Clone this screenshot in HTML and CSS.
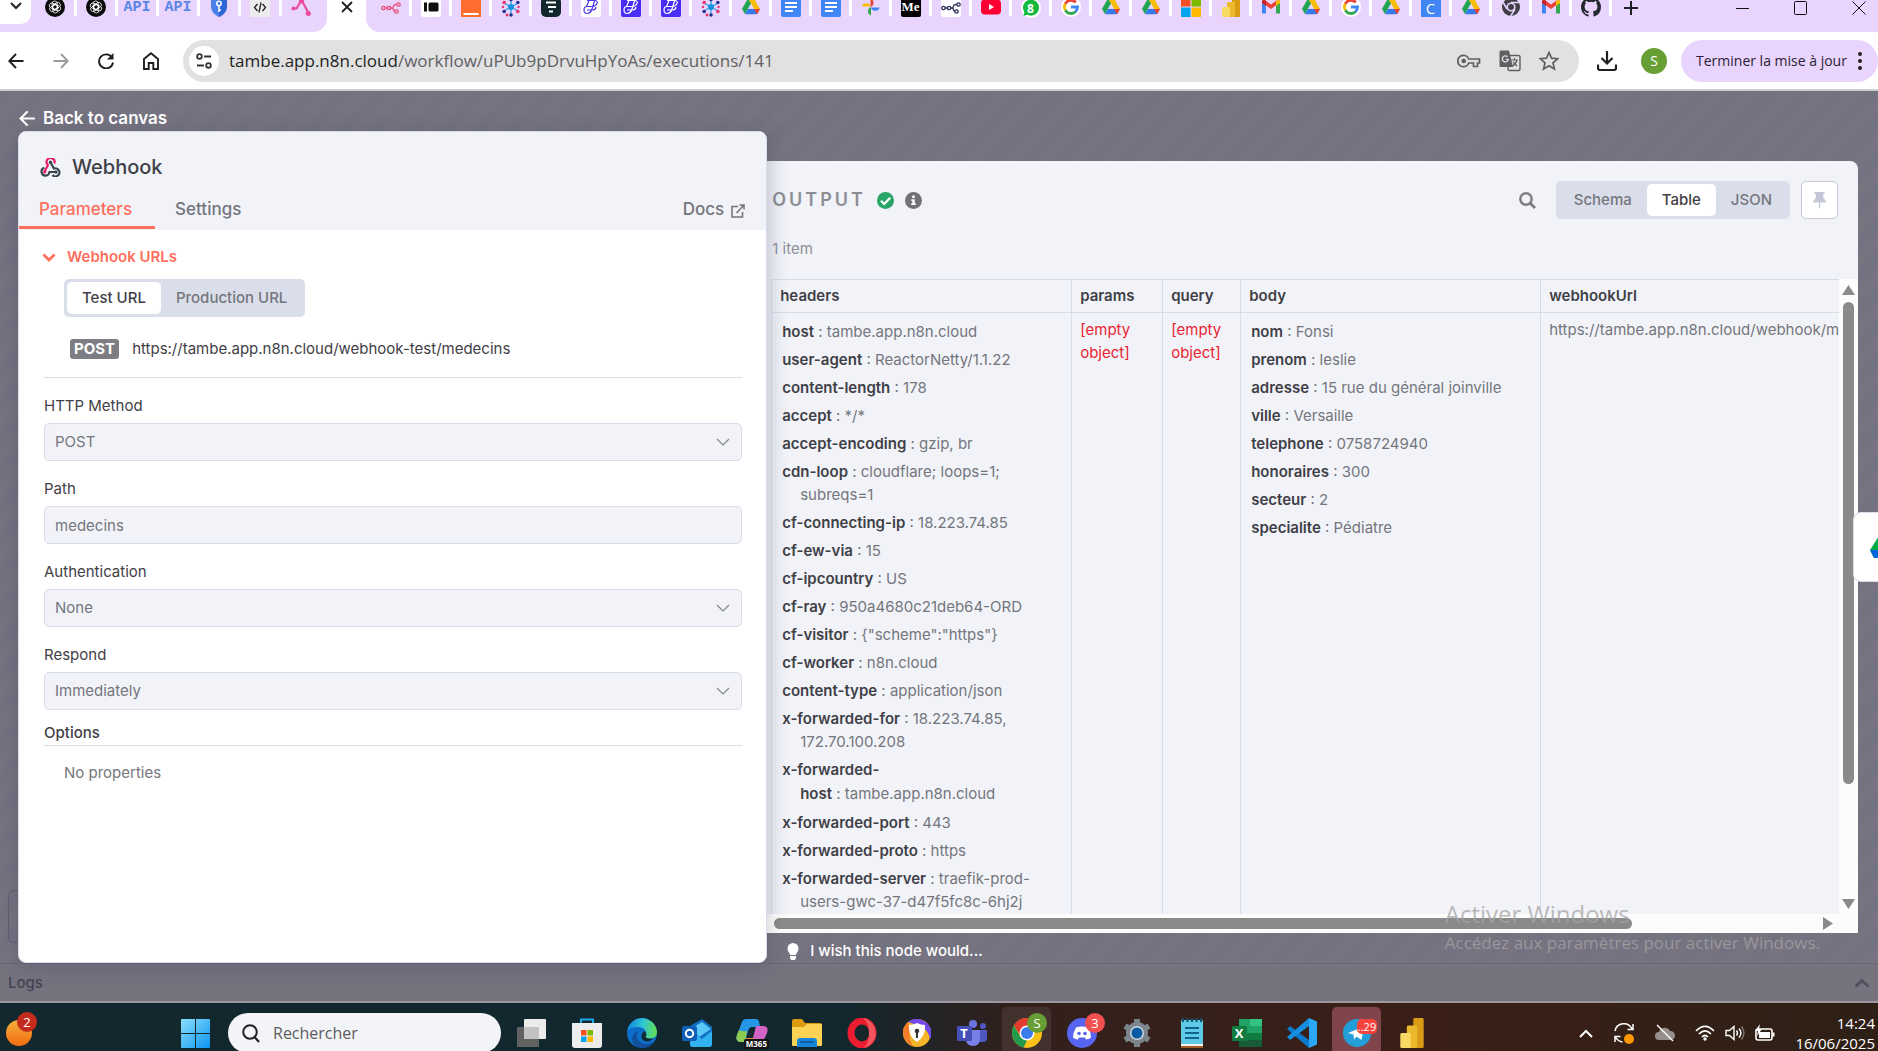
FILE: index.html
```html
<!DOCTYPE html>
<html lang="fr">
<head>
<meta charset="utf-8">
<title>n8n - Webhook</title>
<meta name="viewport" content="width=device-width, initial-scale=1">
<link rel="stylesheet" href="styles.css">
</head>
<body>
<svg class="defs" aria-hidden="true">
  <symbol id="openai" viewBox="0 0 20 20"><circle cx="10" cy="10" r="10" fill="#0b0b0b"/><g fill="none" stroke="#fff" stroke-width=".8"><rect x="7.200" y="4" width="5" height="8.500" rx="2.500"/><rect x="7.200" y="4" width="5" height="8.500" rx="2.500" transform="rotate(60 10 10)"/><rect x="7.200" y="4" width="5" height="8.500" rx="2.500" transform="rotate(120 10 10)"/><rect x="7.200" y="4" width="5" height="8.500" rx="2.500" transform="rotate(180 10 10)"/><rect x="7.200" y="4" width="5" height="8.500" rx="2.500" transform="rotate(240 10 10)"/><rect x="7.200" y="4" width="5" height="8.500" rx="2.500" transform="rotate(300 10 10)"/></g></symbol>
  <symbol id="shield" viewBox="0 0 20 20"><path d="M2 1h16v8c0 6-4 9-8 11-4-2-8-5-8-11z" fill="#4a80ea"/><path d="M10 1h8v8c0 6-4 9-8 11z" fill="#2f66d4"/><circle cx="10" cy="6.500" r="2.200" fill="none" stroke="#fff" stroke-width="1.500"/><path d="M10 9v6M10 13h2" stroke="#fff" stroke-width="1.500"/></symbol>
  <symbol id="code" viewBox="0 0 20 20"><rect width="20" height="20" rx="1" fill="#ececec"/><path d="M7.500 7 4.500 10.500l3 3.500M12.500 7l3 3.500-3 3.500M11 5.500l-2 10" fill="none" stroke="#222" stroke-width="1.300"/></symbol>
  <symbol id="pinkzig" viewBox="0 0 20 20"><path d="M2.500 11.500h3l5-8.500 7 13" fill="none" stroke="#ea4b9b" stroke-width="2.200" stroke-linecap="round" stroke-linejoin="round"/><circle cx="2.500" cy="11.500" r="2" fill="#ea4b9b"/><circle cx="17.300" cy="16.500" r="2.500" fill="#ea4b9b"/><circle cx="10.500" cy="4" r="2.500" fill="#ea4b9b"/></symbol>
  <symbol id="n8n" viewBox="0 0 20 20"><g fill="none" stroke="currentColor" stroke-width="1.300"><circle cx="2.500" cy="11" r="1.700"/><circle cx="8" cy="11" r="1.700"/><circle cx="17.500" cy="7.500" r="1.700"/><circle cx="15.500" cy="14.500" r="1.700"/><path d="M4.200 11h2M9.700 11h1.300q1 0 1.400-1.700t2-1.800h1.300M11 11q1 0 1.400 1.700t1.700 1.800"/></g></symbol>
  <symbol id="ibox" viewBox="0 0 20 20"><rect width="20" height="20" rx="3" fill="#fff"/><rect x="3" y="5.500" width="3" height="9" fill="#111"/><rect x="7.500" y="5.500" width="10" height="9" rx="1.500" fill="#111"/></symbol>
  <symbol id="orange" viewBox="0 0 20 20"><rect width="20" height="20" fill="#ff6d2e"/><path d="M2.500 16h15v2h-15z" fill="#fff"/></symbol>
  <symbol id="molecule" viewBox="0 0 20 20"><g stroke="#28a6e8" stroke-width="1.300"><path d="M10 1v18M2 5.500l16 9M2 14.500l16-9"/></g><circle cx="10" cy="10" r="3" fill="#1b8fe0"/><g fill="#26308a"><circle cx="10" cy="2.500" r="1.800"/><circle cx="16.800" cy="5.500" r="1.800"/><circle cx="3.200" cy="14.500" r="1.800"/><circle cx="10" cy="18" r="1.800"/></g><g fill="#ee3268"><circle cx="3.200" cy="5.500" r="1.800"/><circle cx="16.800" cy="14.500" r="1.800"/><circle cx="6" cy="18" r="1.400"/><circle cx="17.500" cy="10" r="1.200"/><circle cx="2" cy="10" r="1.200"/></g></symbol>
  <symbol id="darkf" viewBox="0 0 20 20"><rect width="20" height="20" rx="5" fill="#12282c"/><path d="M5 5.500h10M7 10h8M8 14.500h4" stroke="#fff" stroke-width="2"/></symbol>
  <symbol id="dzig" viewBox="0 0 20 20"><path d="M6 3.500h8q3 .5 2 3t-4 3H6q-3 0-3 3.500t3 3.500q4-.5 5-4.500l2.500-8M8 3.500 5.500 9.500M6 13h6q3-.5 3-3" fill="none" stroke="currentColor" stroke-width="1.200"/></symbol>
  <symbol id="drive" viewBox="0 0 20 20"><path d="M7 1.500h6l6 10.500h-6z" fill="#fbbc04"/><path d="M7 1.500 1 12l3 5 6-10.500z" fill="#22a552"/><path d="M4 17.300h12l3-5.300H7z" fill="#3478ee"/><path d="M19 12l-3 5.300L13 12z" fill="#ea4335"/><path d="M10 6.800 13 12H7z" fill="#e8d4fd"/></symbol>
  <symbol id="gdoc" viewBox="0 0 20 20"><rect width="20" height="20" rx="2" fill="#4285f4"/><path d="M4 6h12M4 10h12M4 14h8" stroke="#fff" stroke-width="1.800"/></symbol>
  <symbol id="photos" viewBox="0 0 20 20"><path d="M9.500 10V1.500a4.500 4.500 0 0 1 0 8.500z" fill="#ea4335"/><path d="M9.500 9.500H1a4.400 4.400 0 0 1 8.500 0z" fill="#fbbc04"/><path d="M10 10v8.500a4.500 4.500 0 0 1 0-8.500z" fill="#34a853"/><path d="M10 10.500h8.500a4.400 4.400 0 0 1-8.500 0z" fill="#4285f4"/></symbol>
  <symbol id="youtube" viewBox="0 0 20 20"><rect y="2.500" width="20" height="15" rx="4" fill="#ff0033"/><path d="M8 7v6l5-3z" fill="#fff"/></symbol>
  <symbol id="whats" viewBox="0 0 20 20"><circle cx="10" cy="10" r="10" fill="#fff"/><circle cx="10" cy="9.700" r="8" fill="#12b93c"/><path d="M2.500 18 4 12l4 4z" fill="#12b93c"/></symbol>
  <symbol id="google" viewBox="0 0 20 20"><circle cx="10" cy="10" r="10" fill="#fff"/><g fill="none" stroke-width="2.800"><path d="M14.800 5.300A6.600 6.600 0 0 0 4.300 6.800" stroke="#ea4335"/><path d="M4.300 6.800a6.600 6.600 0 0 0 0 6.400" stroke="#fbbc04"/><path d="M4.300 13.200a6.600 6.600 0 0 0 10 1.700" stroke="#34a853"/><path d="M14.300 14.900A6.600 6.600 0 0 0 16.600 10H10" stroke="#4285f4"/></g></symbol>
  <symbol id="msft" viewBox="0 0 20 20"><path d="M0 0h9.500v9.500H0z" fill="#f25022"/><path d="M10.500 0H20v9.500h-9.500z" fill="#7fba00"/><path d="M0 10.500h9.500V20H0z" fill="#00a4ef"/><path d="M10.500 10.500H20V20h-9.500z" fill="#ffb900"/></symbol>
  <symbol id="powerbi" viewBox="0 0 20 20"><rect x="11" y="0" width="8" height="20" rx="1" fill="#d99a15"/><rect x="6" y="5" width="8" height="15" rx="1" fill="#edb92c"/><rect x="1" y="10" width="8" height="10" rx="1" fill="#f8d964"/></symbol>
  <symbol id="gmail" viewBox="0 0 20 20"><path d="M1 5v11.500h4V9z" fill="#4285f4"/><path d="M19 5v11.500h-4V9z" fill="#34a853"/><path d="M1 5.500 10 12l9-6.500V4q-1.500-2-3.500-.5L10 7.500 4.500 3.500Q2.500 2 1 4z" fill="#ea4335"/><path d="M15 4v5l4-3V4q-1.500-2-4 0z" fill="#fbbc04"/><path d="M1 4v2l4 3V4Q2.500 2 1 4z" fill="#c5221f"/></symbol>
  <symbol id="chromemono" viewBox="0 0 20 20"><circle cx="10" cy="10" r="9" fill="#3e4045"/><circle cx="10" cy="10" r="3.800" fill="#3e4045" stroke="#e8d4fd" stroke-width="1.600"/><path d="M10 5.500h8M6 12 2.200 5.500M14 12l-4.300 7" stroke="#e8d4fd" stroke-width="1.500"/></symbol>
  <symbol id="github" viewBox="0 0 16 16"><path fill="#24292f" d="M8 0C3.580 0 0 3.580 0 8c0 3.540 2.290 6.530 5.470 7.590.4.070.55-.17.55-.38 0-.19-.01-.82-.01-1.490-2.010.37-2.530-.49-2.690-.94-.09-.23-.48-.94-.82-1.130-.28-.15-.68-.52-.01-.53.63-.01 1.080.58 1.230.82.72 1.210 1.870.87 2.330.66.07-.52.28-.87.51-1.070-1.780-.2-3.640-.89-3.640-3.950 0-.87.31-1.590.82-2.150-.08-.2-.36-1.020.08-2.120 0 0 .67-.21 2.200.82a7.600 7.600 0 0 1 4 0c1.530-1.040 2.200-.82 2.200-.82.44 1.100.16 1.920.08 2.120.51.56.82 1.270.82 2.150 0 3.070-1.870 3.750-3.650 3.950.29.25.54.73.54 1.480 0 1.070-.01 1.930-.01 2.200 0 .21.15.46.55.38A8 8 0 0 0 16 8c0-4.420-3.580-8-8-8z"/></symbol>
  <symbol id="chev" viewBox="0 0 16 16"><path d="m2 5 6 6 6-6" fill="none" stroke="currentColor" stroke-width="1.200"/></symbol>
</svg>

<header class="tabstrip">
  <div class="tabs tabs-left">
    <button class="tab-search" aria-label="Rechercher dans les onglets"><svg width="12" height="12" viewBox="0 0 12 12"><path d="m1 3 5 5 5-5" fill="none" stroke="#222" stroke-width="2"/></svg></button>
    <button class="tab"><svg class="fav"><use href="#openai"/></svg></button>
    <button class="tab"><svg class="fav"><use href="#openai"/></svg></button>
    <button class="tab fav-api">API</button>
    <button class="tab fav-api">API</button>
    <button class="tab"><svg class="fav"><use href="#shield"/></svg></button>
    <button class="tab"><svg class="fav"><use href="#code"/></svg></button>
    <button class="tab last"><svg class="fav"><use href="#pinkzig"/></svg></button>
  </div>
  <button class="tab-active" aria-label="Fermer l'onglet"><svg width="12" height="12" viewBox="0 0 12 12"><path d="m1 1 10 10M11 1 1 11" stroke="#1f1f1f" stroke-width="1.800"/></svg></button>
  <div class="tabs tabs-right">
    <button class="tab"><svg class="fav pink"><use href="#n8n"/></svg></button>
    <button class="tab"><svg class="fav"><use href="#ibox"/></svg></button>
    <button class="tab"><svg class="fav"><use href="#orange"/></svg></button>
    <button class="tab"><svg class="fav"><use href="#molecule"/></svg></button>
    <button class="tab"><svg class="fav"><use href="#darkf"/></svg></button>
    <button class="tab"><svg class="fav on-white violet"><use href="#dzig"/></svg></button>
    <button class="tab"><svg class="fav on-violet"><use href="#dzig"/></svg></button>
    <button class="tab"><svg class="fav on-violet"><use href="#dzig"/></svg></button>
    <button class="tab"><svg class="fav"><use href="#molecule"/></svg></button>
    <button class="tab"><svg class="fav"><use href="#drive"/></svg></button>
    <button class="tab"><svg class="fav"><use href="#gdoc"/></svg></button>
    <button class="tab"><svg class="fav"><use href="#gdoc"/></svg></button>
    <button class="tab"><svg class="fav"><use href="#photos"/></svg></button>
    <button class="tab"><span class="fav fav-medium">Me</span></button>
    <button class="tab"><svg class="fav on-white navy"><use href="#n8n"/></svg></button>
    <button class="tab"><svg class="fav"><use href="#youtube"/></svg></button>
    <button class="tab stack"><svg class="fav"><use href="#whats"/></svg><span class="fav-num">8</span></button>
    <button class="tab"><svg class="fav"><use href="#google"/></svg></button>
    <button class="tab"><svg class="fav"><use href="#drive"/></svg></button>
    <button class="tab"><svg class="fav"><use href="#drive"/></svg></button>
    <button class="tab"><svg class="fav"><use href="#msft"/></svg></button>
    <button class="tab"><svg class="fav"><use href="#powerbi"/></svg></button>
    <button class="tab"><svg class="fav"><use href="#gmail"/></svg></button>
    <button class="tab"><svg class="fav"><use href="#drive"/></svg></button>
    <button class="tab"><svg class="fav"><use href="#google"/></svg></button>
    <button class="tab"><svg class="fav"><use href="#drive"/></svg></button>
    <button class="tab"><span class="fav fav-c">C</span></button>
    <button class="tab"><svg class="fav"><use href="#drive"/></svg></button>
    <button class="tab"><svg class="fav"><use href="#chromemono"/></svg></button>
    <button class="tab"><svg class="fav"><use href="#gmail"/></svg></button>
    <button class="tab"><svg class="fav"><use href="#github"/></svg></button>
    <button class="tab last" aria-label="Nouvel onglet"><svg width="14" height="14" viewBox="0 0 14 14"><path d="M7 0v14M0 7h14" stroke="#1f1f1f" stroke-width="2"/></svg></button>
    <div class="window-controls">
      <button aria-label="Réduire"><svg width="14" height="14" viewBox="0 0 14 14"><path d="M0 7.500h13" stroke="#111"/></svg></button>
      <button aria-label="Agrandir"><svg width="14" height="14" viewBox="0 0 14 14"><rect x=".5" y=".5" width="12" height="13" rx="1" fill="none" stroke="#111"/></svg></button>
      <button aria-label="Fermer"><svg width="14" height="14" viewBox="0 0 14 14"><path d="m.5.5 13 13M13.500.5l-13 13" stroke="#111"/></svg></button>
    </div>
  </div>
</header>

<nav class="toolbar">
  <button class="nav-btn" aria-label="Retour"><svg width="16" height="16" viewBox="0 0 16 16"><path d="M15.500 8H1.500M8 1 1.300 8 8 15" fill="none" stroke="#1f1f1f" stroke-width="1.900"/></svg></button>
  <button class="nav-btn" aria-label="Avancer"><svg width="16" height="16" viewBox="0 0 16 16"><path d="M.5 8h14M8 1l6.700 7L8 15" fill="none" stroke="#9b9b9b" stroke-width="1.900"/></svg></button>
  <button class="nav-btn" aria-label="Actualiser"><svg width="16" height="16" viewBox="0 0 16 16"><path d="M14 4.600A7 7 0 1 0 15 9.500" fill="none" stroke="#1f1f1f" stroke-width="1.900"/><path d="M15.500 0v6.500H9z" fill="#1f1f1f"/></svg></button>
  <button class="nav-btn" aria-label="Accueil"><svg width="16" height="18" viewBox="0 0 16 18"><path d="M1 17V7l7-5.700L15 7v10h-4.700v-6H5.700v6z" fill="none" stroke="#1f1f1f" stroke-width="1.900"/></svg></button>
  <div class="omnibox">
    <button class="site-info" aria-label="Informations sur le site"><svg width="16" height="16" viewBox="0 0 16 16"><g fill="none" stroke="#333" stroke-width="1.800"><circle cx="3.500" cy="3.500" r="2.300"/><path d="M8 3.500h7M1 12.500h7"/><circle cx="12.500" cy="12.500" r="2.300"/></g></svg></button>
    <a class="url" href="#"><span>tambe.app.n8n.cloud</span>/workflow/uPUb9pDrvuHpYoAs/executions/141</a>
    <button aria-label="Mots de passe"><svg width="24" height="14" viewBox="0 0 24 14"><g fill="none" stroke="#5f6064" stroke-width="1.700"><path d="M11.800 5H22.500v4h-2v3.500h-4V9h-4.700A5.700 5.700 0 1 1 11.800 5z"/></g><circle cx="6.700" cy="7" r="2.300" fill="#5f6064"/></svg></button>
    <button aria-label="Traduire"><svg width="22" height="22" viewBox="0 0 22 22"><rect x="9" y="5.500" width="12" height="15" rx="1.500" fill="none" stroke="#5f6064" stroke-width="1.400"/><path d="M12 10h7M15.500 8v2M18 10q-1 4-5 6.500M14 12l4 4" fill="none" stroke="#5f6064" stroke-width="1.200"/><path d="M2 .5h8l4 16.500H2Q.5 17 .5 15.500V2Q.5.500 2 .5z" fill="#5f6064"/><path d="M8.500 6.800a3 3 0 1 0 .8 2.500H6.800" fill="none" stroke="#e1e1e1" stroke-width="1.300"/></svg></button>
    <button aria-label="Favori"><svg width="20" height="20" viewBox="0 0 20 20"><path d="m10 1.500 2.500 5.700 6.200.6-4.700 4.100 1.400 6.100-5.400-3.200L4.600 18 6 11.900 1.300 7.800l6.200-.6z" fill="none" stroke="#5f6064" stroke-width="1.700"/></svg></button>
  </div>
  <button class="nav-btn" aria-label="Téléchargements"><svg width="20" height="20" viewBox="0 0 20 20"><path d="M10 0v12M4.500 7 10 12.500 15.500 7M1 13.500V17q0 2 2 2h14q2 0 2-2v-3.500" fill="none" stroke="#1f1f1f" stroke-width="2.200"/></svg></button>
  <button class="avatar">S</button>
  <button class="update">Terminer la mise à jour<svg width="4" height="18" viewBox="0 0 4 18"><g fill="#222"><circle cx="2" cy="2" r="2"/><circle cx="2" cy="9" r="2"/><circle cx="2" cy="16" r="2"/></g></svg></button>
</nav>

<main class="workspace">
  <a class="back" href="#"><svg width="16" height="15" viewBox="0 0 16 15"><path d="M15 7.500H2M8 1 1.500 7.500 8 14" fill="none" stroke="#fff" stroke-width="2.200" stroke-linecap="round"/></svg>Back to canvas</a>
  <div class="ghost"></div>
  <div class="panels">
    <section class="node">
      <div class="node-head">
        <h1><svg width="21" height="19" viewBox="0 0 21 19"><g fill="none" stroke-width="2.100"><path d="M14.300 5.500A4 4 0 1 0 8 7l-3.200 6" stroke="#e91e63"/><path d="M10.500 4.500 14 10.600a4 4 0 1 1-1.600 6.400" stroke="#37474f"/><path d="M4.300 9.800a4 4 0 1 0 5.200 4.200h6.500" stroke="#37474f"/></g><circle cx="4.800" cy="13.800" r="1.700" fill="#e91e63"/><circle cx="10.500" cy="4.300" r="1.700" fill="#37474f"/><circle cx="16" cy="14" r="1.700" fill="#37474f"/></svg>Webhook</h1>
        <div class="node-tabs">
          <button class="active">Parameters</button>
          <button>Settings</button>
          <a href="#">Docs<svg width="14" height="14" viewBox="0 0 14 14"><path d="M7 2.500H1V13h10.500V8M8.500 1H13v4.500M13 1 5.500 9" fill="none" stroke="currentColor" stroke-width="1.600"/></svg></a>
        </div>
      </div>
      <div class="node-body">
        <button class="collapse"><svg width="14" height="9" viewBox="0 0 14 9"><path d="m1.500 1.500 5.500 5.500 5.500-5.500" fill="none" stroke="currentColor" stroke-width="2.800"/></svg>Webhook URLs</button>
        <div class="toggle url-toggle"><button class="on">Test URL</button><button>Production URL</button></div>
        <div class="endpoint"><span class="method">POST</span><span>https://tambe.app.n8n.cloud/webhook-test/medecins</span></div>
        <div class="field">
          <label for="method">HTTP Method</label>
          <div class="select"><select id="method"><option>POST</option></select><svg><use href="#chev"/></svg></div>
        </div>
        <div class="field">
          <label for="path">Path</label>
          <input id="path" type="text" value="medecins" readonly>
        </div>
        <div class="field">
          <label for="auth">Authentication</label>
          <div class="select"><select id="auth"><option>None</option></select><svg><use href="#chev"/></svg></div>
        </div>
        <div class="field">
          <label for="respond">Respond</label>
          <div class="select"><select id="respond"><option>Immediately</option></select><svg><use href="#chev"/></svg></div>
        </div>
        <h2>Options</h2>
        <p class="none">No properties</p>
      </div>
    </section>

    <div class="right">
      <section class="output">
        <div class="output-head">
          <h2>OUTPUT</h2>
          <svg width="17" height="17" viewBox="0 0 17 17"><circle cx="8.500" cy="8.500" r="8.500" fill="#29a568"/><path d="m4 8.800 3.200 3.200 6-6.200" fill="none" stroke="#fff" stroke-width="2.200"/></svg>
          <svg width="17" height="17" viewBox="0 0 17 17"><circle cx="8.500" cy="8.500" r="8.500" fill="#717276"/><path d="M7.200 3.500h2.600V6H7.200zM6.300 7.200h3.500v4h1v1.800H6.300v-1.800h1V9h-1z" fill="#fff"/></svg>
          <button class="find" aria-label="Search"><svg width="17" height="17" viewBox="0 0 17 17"><circle cx="7" cy="7" r="5.700" fill="none" stroke="#7d7d83" stroke-width="2.400"/><path d="m11 11 5 5" stroke="#7d7d83" stroke-width="2.800"/></svg></button>
          <div class="toggle view-toggle"><button>Schema</button><button class="on">Table</button><button>JSON</button></div>
          <button class="pin" aria-label="Pin"><svg width="13" height="17" viewBox="0 0 13 17"><path d="M1.500 0h10v2.200H10l.5 4.300q2.500 1.300 2.500 4H7.200V15l-.7 2-.7-2v-4.500H0q0-2.700 2.500-4L3 2.200H1.500z" fill="#c3c7d6"/></svg></button>
        </div>
        <p class="count">1 item</p>
        <div class="scroller">
          <div class="viewport">
            <table>
              <colgroup><col class="c-headers"><col class="c-params"><col class="c-query"><col class="c-body"><col class="c-url"></colgroup>
              <thead><tr><th>headers</th><th>params</th><th>query</th><th>body</th><th>webhookUrl</th></tr></thead>
              <tbody><tr>
                <td><ul>
                  <li><b>host</b> : tambe.app.n8n.cloud</li>
                  <li><b>user-agent</b> : ReactorNetty/1.1.22</li>
                  <li><b>content-length</b> : 178</li>
                  <li><b>accept</b> : */*</li>
                  <li><b>accept-encoding</b> : gzip, br</li>
                  <li><b>cdn-loop</b> : cloudflare; loops=1;<br>subreqs=1</li>
                  <li><b>cf-connecting-ip</b> : 18.223.74.85</li>
                  <li><b>cf-ew-via</b> : 15</li>
                  <li><b>cf-ipcountry</b> : US</li>
                  <li><b>cf-ray</b> : 950a4680c21deb64-ORD</li>
                  <li><b>cf-visitor</b> : {"scheme":"https"}</li>
                  <li><b>cf-worker</b> : n8n.cloud</li>
                  <li><b>content-type</b> : application/json</li>
                  <li><b>x-forwarded-for</b> : 18.223.74.85,<br>172.70.100.208</li>
                  <li class="split-key"><b>x-forwarded-<br>host</b> : tambe.app.n8n.cloud</li>
                  <li><b>x-forwarded-port</b> : 443</li>
                  <li><b>x-forwarded-proto</b> : https</li>
                  <li><b>x-forwarded-server</b> : traefik-prod-<br>users-gwc-37-d47f5fc8c-6hj2j</li>
                </ul></td>
                <td class="empty">[empty<br>object]</td>
                <td class="empty">[empty<br>object]</td>
                <td><ul>
                  <li><b>nom</b> : Fonsi</li>
                  <li><b>prenom</b> : leslie</li>
                  <li><b>adresse</b> : 15 rue du général joinville</li>
                  <li><b>ville</b> : Versaille</li>
                  <li><b>telephone</b> : 0758724940</li>
                  <li><b>honoraires</b> : 300</li>
                  <li><b>secteur</b> : 2</li>
                  <li><b>specialite</b> : Pédiatre</li>
                </ul></td>
                <td>https://tambe.app.n8n.cloud/webhook/m</td>
              </tr></tbody>
            </table>
          </div>
          <div class="vbar"><svg width="13" height="10" viewBox="0 0 13 10"><path d="M6.500 0 13 10H0z" fill="#8a8a8a"/></svg><span class="vthumb"></span><svg width="13" height="10" viewBox="0 0 13 10"><path d="M0 0h13L6.500 10z" fill="#8a8a8a"/></svg></div>
          <div class="hbar"><span class="hthumb"></span><svg width="10" height="13" viewBox="0 0 10 13"><path d="M0 0v13l10-6.500z" fill="#8a8a8a"/></svg></div>
        </div>
      </section>
      <a class="wish" href="#"><svg width="12" height="17" viewBox="0 0 12 17"><path d="M6 0a5.500 5.500 0 0 1 5.500 5.500q0 2-1.500 4-1 1.500-1 2.500H3q0-1-1-2.500-1.500-2-1.500-4A5.500 5.500 0 0 1 6 0zM3 13h6v2l-1 2H4l-1-2z" fill="#fff"/></svg>I wish this node would...</a>
    </div>
  </div>
  <div class="logs">Logs<svg width="16" height="10" viewBox="0 0 16 10"><path d="m1.500 8.500 6.500-6 6.500 6" fill="none" stroke="#504e5e" stroke-width="2.600"/></svg></div>
  <div class="side-drive"><svg width="26" height="26" viewBox="0 0 26 26"><path d="M9 1 0 15l4 8 9-15z" fill="#00ac47"/><path d="M0 15h16v8H4z" fill="#0066da"/></svg></div>
</main>

<footer class="taskbar">
  <button class="weather" aria-label="Widgets"><svg width="28" height="28" viewBox="0 0 28 28"><defs><linearGradient id="sun" x1="0" y1="0" x2="0" y2="1"><stop offset="0" stop-color="#f3b13a"/><stop offset="1" stop-color="#f26a10"/></linearGradient></defs><circle cx="14" cy="14" r="13" fill="url(#sun)"/></svg><span class="badge red">2</span></button>
  <button class="start" aria-label="Démarrer"><svg width="29" height="29" viewBox="0 0 29 29"><defs><linearGradient id="win" x1="0" y1="0" x2="1" y2="1"><stop offset="0" stop-color="#8be0fd"/><stop offset="1" stop-color="#0c93f3"/></linearGradient></defs><path d="M0 1q0-1 1-1h13v14H0zM15 0h13q1 0 1 1v13H15zM0 15h14v14H1q-1 0-1-1zM15 15h14v13q0 1-1 1H15z" fill="url(#win)"/></svg></button>
  <label class="search"><svg width="18" height="19" viewBox="0 0 18 19"><circle cx="8" cy="8" r="6.800" fill="none" stroke="#222" stroke-width="2"/><path d="m12.500 13 4.500 5" stroke="#222" stroke-width="2.200"/></svg><input type="search" placeholder="Rechercher" aria-label="Rechercher"></label>
  <div class="apps">
    <button><svg width="30" height="30" viewBox="0 0 30 30"><rect y="9" width="22" height="20" rx="1" fill="#626262"/><rect x="7" y="1" width="22" height="20" rx="1" fill="#ececec"/><path d="M7 9h15v12H7z" fill="#c2c2c2"/></svg></button>
    <button><svg width="30" height="30" viewBox="0 0 30 30"><path d="M9 6V1.500h12V6" fill="none" stroke="#1fa9ea" stroke-width="2"/><path d="M0 5h30v22q0 3-3 3H3q-3 0-3-3z" fill="#ececec"/><path d="M9 12h5.500v5.500H9z" fill="#f25022"/><path d="M15.500 12H21v5.500h-5.500z" fill="#7fba00"/><path d="M9 18.500h5.500V24H9z" fill="#00a4ef"/><path d="M15.500 18.500H21V24h-5.500z" fill="#ffb900"/></svg></button>
    <button><svg width="30" height="30" viewBox="0 0 30 30"><defs><linearGradient id="edge" x1="0" y1=".3" x2="1" y2=".4"><stop offset="0" stop-color="#0f84dc"/><stop offset=".5" stop-color="#2fc3d6"/><stop offset="1" stop-color="#62dd55"/></linearGradient></defs><circle cx="15" cy="15" r="15" fill="#0b6fc9"/><path d="M.2 13A15 15 0 0 1 30 14q0 6-7 6.500-5 0-5-2 2-2 1-5-2-4-7-4.500Q4 8.500.2 13z" fill="url(#edge)"/><path d="M11 13q-3 6 2 11 6 4 14 0-4 6-12 6-9-1-10-9 0-6 6-8z" fill="#124f9c"/><path d="M17 13q4 3 1.500 6 2 2.500 8 1.500-4 4-9 2.500-5-3-2-8z" fill="#132a30"/></svg></button>
    <button><svg width="30" height="28" viewBox="0 0 30 28"><path d="M8 7 20 0l10 8v17q0 3-3 3H11q-3 0-3-3z" fill="#1271c4"/><path d="M10 9 20 3l9 7-12 8z" fill="#58c7f7"/><path d="M8 12l12 8 10-8v13q0 3-3 3H11q-3 0-3-3z" fill="#32b2f0"/><rect y="7" width="15" height="15" rx="2" fill="#0f5fb8"/><circle cx="7.500" cy="14.500" r="3.700" fill="none" stroke="#fff" stroke-width="2"/></svg></button>
    <button class="stack"><svg width="32" height="30" viewBox="0 0 32 30"><path d="M10 1h10q3 0 3.500 5L24 9h-8q-3 0-4 4L9 24H4q-5-1-3-7L6 4q1-3 4-3z" fill="#2697e8"/><path d="M3 12q4 2 8 1L9 24H4q-5-1-3-7z" fill="#8ccb50"/><path d="M20 8h8q5 1 3 7l-4 9q-2 4-6 4h-6z" fill="#d463c6"/><path d="M10 20h8l-3 8q-4 0-5-4z" fill="#f2863b"/></svg><span class="m365">M365</span></button>
    <button><svg width="30" height="28" viewBox="0 0 30 28"><path d="M0 2q0-2 2-2h8l3 4h15q2 0 2 2v8H0z" fill="#dc9a10"/><path d="M0 8h12l3-3h15v21q0 1-1 1H1q-1 0-1-1z" fill="#fcd254"/><path d="M5 28v-6q0-3 3-3h14q3 0 3 3v6z" fill="#1785d8"/><path d="M8 23h14" stroke="#0c5291" stroke-width="1.500"/></svg></button>
    <button><svg width="30" height="30" viewBox="0 0 30 30"><ellipse cx="15" cy="15" rx="11" ry="12" fill="none" stroke="#ec1c30" stroke-width="7"/><path d="M16 .3a15 15 0 0 1 1 29.500q5-5 5-15T16 .3z" fill="#f4545b"/></svg></button>
    <button><svg width="28" height="28" viewBox="0 0 28 28"><circle cx="14" cy="14" r="14" fill="#f7b62a"/><path d="M5 3q9-7 19 1 7 7 3 16-2-9-8-12Q12 5 5 3z" fill="#7448e8"/><path d="M5 3q-7 6-4 15 3 7 9 9-5-8-3-15z" fill="#f47b2a"/><path d="M14 4q4 2 8 2 1 11-8 17-9-6-8-17 4 0 8-2z" fill="#fff"/><circle cx="14" cy="12" r="2.300" fill="#333"/><path d="M13 12h2v7h-2z" fill="#333"/></svg></button>
    <button class="stack"><svg width="30" height="26" viewBox="0 0 30 26"><circle cx="16" cy="4" r="4" fill="#6b75e0"/><circle cx="26" cy="6" r="3" fill="#4f57c0"/><path d="M22 10h8v8q0 4-4 4h-4z" fill="#4f57c0"/><path d="M9 10h14v9q0 7-7 7t-7-7z" fill="#7880e8"/><rect y="6" width="15" height="15" rx="1" fill="#4550b8"/></svg><span class="teams-t">T</span></button>
    <button class="open"><svg width="30" height="30" viewBox="0 0 30 30"><circle cx="15" cy="15" r="15" fill="#fbc116"/><path d="M2 7.500A15 15 0 0 1 28 7.500H15L8.500 18z" fill="#e33b2e"/><path d="M2 7.500 8.500 19l6.500 3.500-3.500 7A15 15 0 0 1 2 7.500z" fill="#229a4b"/><circle cx="15" cy="15" r="7.500" fill="#fff"/><circle cx="15" cy="15" r="6" fill="#3b7ded"/></svg><span class="badge green">S</span></button>
    <button><svg width="30" height="30" viewBox="0 0 30 30"><circle cx="15" cy="15" r="15" fill="#5865f2"/><path d="M9 9.500q6-2 12 0 3 5 3 10-2 2-5 2l-1-2h-6l-1 2q-3 0-5-2 0-5 3-10z" fill="#fff"/><circle cx="12" cy="15.500" r="1.800" fill="#5865f2"/><circle cx="18" cy="15.500" r="1.800" fill="#5865f2"/></svg><span class="badge coral">3</span></button>
    <button><svg width="30" height="30" viewBox="0 0 30 30"><circle cx="15" cy="15" r="11" fill="#7c858c"/><path d="M15 1v28M3 8l24 14M27 8 3 22" stroke="#7c858c" stroke-width="6"/><circle cx="15" cy="15" r="7" fill="#d0d6da"/><circle cx="15" cy="15" r="5.500" fill="#0b59a2"/></svg></button>
    <button><svg width="24" height="30" viewBox="0 0 24 30"><rect x="1" y="2" width="22" height="26" rx="1" fill="#5fc9e8"/><path d="M1 26h22v2H1z" fill="#f4f4f4"/><path d="M1 28h22v2H1z" fill="#a15a22"/><path d="M5 10h14M5 15h14M5 20h14" stroke="#11618e" stroke-width="2"/><path d="M3 0v4M7.500 0v4M12 0v4M16.500 0v4M21 0v4" stroke="#10506c" stroke-width="2"/></svg></button>
    <button class="stack"><svg width="30" height="28" viewBox="0 0 30 28"><path d="M7 0h11v14H7z" fill="#21a366"/><path d="M18 0h12v7H18z" fill="#33c481"/><path d="M18 7h12v7H18z" fill="#21a366"/><path d="M7 14h23v7H7z" fill="#107c41"/><path d="M7 21h23v7H7z" fill="#185c37"/><rect y="7" width="15" height="15" rx="1" fill="#107c41"/></svg><span class="excel-x">X</span></button>
    <button><svg width="30" height="30" viewBox="0 0 30 30"><path d="M22 0v30L0 11l3-3 19 14z" fill="#0a7acc"/><path d="M22 0v8L3 22l-3-3z" fill="#1590e0"/><path d="m22 0 8 3.500v23L22 30z" fill="#2ba7f5"/></svg></button>
    <button class="alert"><svg width="28" height="28" viewBox="0 0 28 28"><circle cx="14" cy="14" r="14" fill="#229ed9"/><path d="m5 14 16-6.500L18.500 21l-5-3.500-2.500 3-.5-5z" fill="#fff"/></svg><span class="badge count-badge">..29</span></button>
    <button><svg width="26" height="30" viewBox="0 0 20 20" preserveAspectRatio="none"><use href="#powerbi" width="20" height="20"/></svg></button>
  </div>
  <div class="tray">
    <svg width="14" height="9" viewBox="0 0 14 9"><path d="m1 8 6-6 6 6" fill="none" stroke="#fff" stroke-width="2"/></svg>
    <svg width="22" height="22" viewBox="0 0 22 22"><path d="M2 9a9 9 0 0 1 17-2M20 2v5.500h-5.500M2 20v-5.500h5.500M2.500 15q2 4 7 5" fill="none" stroke="#fff" stroke-width="1.500"/><circle cx="16" cy="17" r="5" fill="#ff9700"/></svg>
    <svg width="20" height="18" viewBox="0 0 20 18"><path d="M4 16a4 4 0 0 1 0-8 6 6 0 0 1 11-1 4.500 4.500 0 0 1 1 9z" fill="#978f8c"/><path d="m2 1 16 16" stroke="#fff" stroke-width="1.400"/></svg>
    <svg width="20" height="16" viewBox="0 0 20 16"><g fill="none" stroke="#fff" stroke-width="1.700"><path d="M1 6q9-9 18 0M4 9q6-6 12 0M7 12q3-3 6 0"/></g><circle cx="10" cy="14" r="1.700" fill="#fff"/></svg>
    <svg width="20" height="16" viewBox="0 0 20 16"><path d="M1 5.500h3.500L9 1.500v13l-4.500-4H1z" fill="none" stroke="#fff" stroke-width="1.400"/><path d="M11.500 5.500q2 2.500 0 5M14 3.500q4 4.500 0 9" fill="none" stroke="#fff" stroke-width="1.400"/><path d="M16.500 1.500q5 6.500 0 13" fill="none" stroke="#7d736d" stroke-width="1.400"/></svg>
    <svg width="20" height="18" viewBox="0 0 20 18"><rect x="1" y="5" width="16" height="11" rx="2" fill="none" stroke="#fff" stroke-width="1.600"/><rect x="4" y="8" width="11" height="6" fill="#fff"/><path d="M18.500 8.500v4" stroke="#fff" stroke-width="2"/><path d="M5 0 0 7h3l-1 5 5-7H4z" fill="#fff"/></svg>
    <time datetime="2025-06-16T14:24">14:24<br>16/06/2025</time>
  </div>
</footer>

<div class="watermark"><strong>Activer Windows</strong><span>Accédez aux paramètres pour activer Windows.</span></div>
</body>
</html>
```
FILE: styles.css
```css
:root {
  --lilac: #e8d4fd;
  --panel: #f1f3f9;
  --line: #d9dde9;
  --coral: #ff6f5c;
  --text: #3f4046;
  --muted: #75767c;
  --inter: Inter, "Liberation Sans", sans-serif;
  --segoe: "Open Sans", "Noto Sans", sans-serif;
}

* { box-sizing: border-box; }

body {
  margin: 0;
  height: 100vh;
  display: flex;
  flex-direction: column;
  overflow: hidden;
  background: #fff;
  font: 15px/20px var(--inter);
  color: var(--text);
}

button {
  padding: 0;
  border: 0;
  background: none;
  font: inherit;
  color: inherit;
}

a { color: inherit; text-decoration: none; }
svg { flex: none; display: block; }
.defs { position: absolute; width: 0; height: 0; }

/* Browser tabs */
.tabstrip { display: flex; height: 32px; flex: none; }
.tabs { display: flex; background: var(--lilac); }
.tabs-left { width: 327px; border-bottom-right-radius: 14px; }
.tabs-right { flex: 1; padding-left: 6px; border-bottom-left-radius: 14px; }
.tab-search { width: 31px; height: 24px; margin-right: 5px; background: #fff; border-bottom-right-radius: 10px; display: flex; justify-content: center; }
.tab { width: 40px; height: 16px; border-right: 3px solid #fff; display: flex; flex: none; align-items: center; justify-content: center; }
.tabs-left .tab { width: 41px; }
.tab.last { border-color: transparent; }
.tab-active { width: 39px; height: 14px; display: flex; align-items: center; justify-content: center; }
.fav { width: 20px; height: 20px; margin-top: -2px; }
.fav-api { font: bold 15px/14px "Liberation Mono", monospace; color: #5c86e6; }
.pink { color: #ea4b71; }
.violet { color: #4a35e8; }
.navy { color: #2a2f55; }
.on-white { background: #fff; border-radius: 2px; }
.on-violet { background: #4a2df5; color: #fff; border-radius: 2px; }
.fav-medium { background: #000; color: #fff; font: bold 13px/20px "Liberation Serif", serif; border-radius: 2px; }
.fav-c { background: #4285f4; color: #fff; font: 15px/22px var(--segoe); }
.stack { display: grid; place-items: center; }
.stack > * { grid-area: 1 / 1; }
.fav-num { color: #fff; font: bold 12px/14px var(--segoe); }
.window-controls { margin-left: auto; display: flex; gap: 44px; padding-right: 12px; height: 15px; align-items: center; }

/* Address bar */
.toolbar { height: 59px; flex: none; display: flex; align-items: center; border-bottom: 2px solid #cdcdcd; padding-left: 8px; font-family: var(--segoe); }
.nav-btn { width: 16px; margin-right: 29px; display: flex; justify-content: center; flex: none; }
.omnibox { flex: 1; height: 42px; border-radius: 21px; background: #e1e1e1; display: flex; align-items: center; gap: 18px; padding: 0 20px 0 6px; margin-right: 18px; margin-left: -5px; }
.site-info { width: 30px; height: 30px; border-radius: 50%; background: #fff; display: grid; place-items: center; margin-right: -8px; }
.url { flex: 1; font-size: 17px; color: #5f6064; }
.url span { color: #1f1f1f; }
.toolbar > .nav-btn:nth-of-type(5) { width: 20px; margin-right: 24px; }
.avatar { width: 26px; height: 26px; border-radius: 50%; background: #679f35; color: #fff; font-size: 14px; margin-right: 14px; }
.update { width: 197px; height: 42px; border-radius: 21px; background: var(--lilac); font-size: 14px; color: #2b2333; display: flex; align-items: center; justify-content: space-between; padding: 0 16px 0 15px; white-space: nowrap; }

/* Editor area */
.workspace {
  position: relative;
  flex: 1;
  min-height: 0;
  display: flex;
  flex-direction: column;
  background: repeating-linear-gradient(135deg, #737280 0 12px, #777380 12px 24px);
}
.back { height: 40px; padding: 14px 0 0 19px; display: flex; align-items: center; gap: 8px; color: #fff; font-size: 17px; font-weight: 600; align-self: flex-start; }
.ghost { position: absolute; left: 8px; bottom: 60px; width: 40px; height: 53px; border: 1px solid #5f5d6b; border-radius: 6px; }
.panels { flex: 1; min-height: 0; display: flex; padding: 0 20px 0 18px; }

.node { position: relative; flex: 748 1 0; min-width: 0; background: #fff; border: 1px solid var(--line); border-radius: 8px; overflow: hidden; box-shadow: 0 4px 20px rgba(50, 50, 80, .25); }
.node-head { background: var(--panel); padding-top: 23px; }
.node h1 { margin: 0; padding-left: 21px; display: flex; align-items: center; gap: 11px; font-size: 20px; line-height: 24px; font-weight: 500; }
.node-tabs { display: flex; height: 51px; padding-right: 21px; font-size: 17px; font-weight: 500; color: var(--muted); }
.node-tabs > * { padding: 12px 23px 0 20px; height: 50px; }
.node-tabs .active { color: var(--coral); border-bottom: 3px solid var(--coral); }
.node-tabs button { display: flex; }
.node-tabs button { padding-top: 20px; }
.node-tabs a { margin-left: auto; padding: 20px 0 0; display: flex; gap: 7px; }
.node-tabs a svg { margin-top: 5px; }
.node-body { padding: 17px 24px 0 25px; }
.collapse { display: flex; align-items: center; gap: 11px; color: var(--coral); font-weight: 600; }
.collapse svg { margin-left: -2px; }
.toggle { display: inline-flex; background: #dadeea; border-radius: 5px; padding: 3px; height: 38px; font-weight: 500; color: var(--muted); }
.toggle button { padding: 0 15px; border-radius: 5px; }
.toggle .on { background: #fff; color: var(--text); }
.url-toggle { margin: 12px 0 0 20px; }
.endpoint { display: flex; align-items: center; gap: 13px; padding: 22px 0 18px 26px; border-bottom: 1px solid var(--line); margin-bottom: 18px; }
.method { background: #7d7e84; color: #fff; border-radius: 3px; padding: 0 4px; font-weight: 700; }
.field { display: flex; flex-direction: column; gap: 7px; margin-bottom: 18px; }
.field:last-of-type { margin-bottom: 13px; }
.field input, .field select { width: 100%; height: 38px; border: 1px solid var(--line); border-radius: 5px; background: var(--panel); color: var(--muted); font: inherit; padding: 0 10px; appearance: none; }
.select { display: grid; align-items: center; }
.select > * { grid-area: 1 / 1; }
.select svg { width: 16px; height: 16px; justify-self: end; margin-right: 11px; color: #85868c; pointer-events: none; }
.node-body h2 { margin: 0; font-size: 15px; line-height: 20px; font-weight: 500; padding-bottom: 2px; border-bottom: 1px solid var(--line); }
.none { margin: 17px 0 0 20px; color: var(--muted); }

.right { flex: 1092 1 0; min-width: 0; display: flex; flex-direction: column; padding-top: 30px; }
.output { flex: 1; min-height: 0; display: flex; flex-direction: column; background: linear-gradient(90deg, #e9ebf3, var(--panel) 20px); border-radius: 0 8px 0 0; padding-left: 4px; }
.output-head { display: flex; align-items: center; gap: 11px; padding: 20px 20px 0 1px; }
.output h2 { margin: 0; font-size: 18px; line-height: 24px; font-weight: 600; letter-spacing: 3px; color: #8d8e94; }
.find { margin-left: auto; margin-right: 9px; }
.pin { width: 37px; height: 38px; background: #fff; border: 1px solid #c3c7d6; border-radius: 5px; display: grid; place-items: center; }
.count { margin: 20px 0 20px 1px; color: #8f9096; }
.scroller { flex: 1; min-height: 0; display: grid; grid-template: minmax(0, 1fr) 19px / minmax(0, 1fr) 19px; }
.viewport { grid-area: 1 / 1; overflow: hidden; }
table { table-layout: fixed; width: 100%; height: 100%; border-collapse: collapse; }
.c-headers { width: 300px; }
.c-params { width: 91px; }
.c-query { width: 78px; }
.c-body { width: 300px; }
th, td { border: 1px solid var(--line); text-align: left; vertical-align: top; }
th { height: 33px; padding: 0 8px; vertical-align: middle; font-weight: 600; }
td { padding: 5px 0 0 8px; line-height: 23px; color: var(--muted); white-space: nowrap; border-bottom: 0; }
th:last-child, td:last-child { border-right: 0; }
td ul { list-style: none; margin: 0; padding: 2px 0 0 2px; }
td li { padding-left: 18px; text-indent: -18px; margin-bottom: 5px; }
td li:last-child { margin-bottom: 0; }
td b { font-weight: 600; color: var(--text); }
.split-key { line-height: 24px; }
.empty { color: #ea1f30; }
.vbar { grid-area: 1 / 2 / 3 / 3; background: #fcfcfc; display: flex; flex-direction: column; align-items: center; padding: 6px 0 24px; gap: 7px; }
.vthumb { width: 11px; flex: 1; background: #8a8a8a; border-radius: 6px; margin-bottom: 108px; }
.hbar { grid-area: 2 / 1; background: #fcfcfc; display: flex; align-items: center; margin-left: -4px; padding: 0 6px 0 7px; }
.hthumb { width: 81%; height: 11px; background: #8a8a8a; border-radius: 6px; margin-right: auto; }
.wish { height: 30px; padding: 6px 0 0 20px; display: flex; align-items: center; align-self: flex-start; gap: 11px; color: #fff; font-weight: 500; }
.logs { height: 40px; flex: none; display: flex; align-items: center; justify-content: space-between; padding: 0 8px; background: #76737f; border-top: 1px solid #6a6779; border-bottom: 2px solid #9b999f; color: #454352; font-weight: 500; }
.side-drive { position: absolute; right: 0; top: 421px; width: 25px; height: 70px; border-radius: 8px 0 0 8px; background: #fff; border: 1px solid var(--line); border-right: 0; overflow: hidden; padding: 22px 0 0 16px; }

/* Windows taskbar */
.taskbar { height: 48px; flex: none; display: flex; align-items: center; padding: 12px 3px 0 5px; font-family: var(--segoe); color: #fff; background: linear-gradient(90deg, #12272e 0 45%, #32201c 54%, #3a1f18 75%, #2e2016); }
.weather { position: relative; width: 28px; margin-right: 148px; }
.badge { position: absolute; min-width: 20px; height: 20px; border-radius: 10px; font-size: 13px; line-height: 20px; color: #fff; text-align: center; }
.red { background: #c42b1c; left: 12px; top: -7px; }
.start { margin-right: 18px; }
.search { width: 273px; height: 40px; border-radius: 20px; background: #f3f4f7; display: flex; align-items: center; gap: 13px; padding-left: 14px; margin-right: 3px; }
.search input { border: 0; background: none; outline: 0; font: 16px/22px var(--segoe); width: 200px; padding: 0; }
.search input::placeholder { color: #5c5c5c; opacity: 1; }
.apps { display: flex; align-self: stretch; margin-top: -8px; }
.apps button { position: relative; width: 55px; display: grid; place-items: center; padding-top: 8px; }
.apps .open { background: rgba(255, 255, 255, .08); border-radius: 5px 5px 0 0; width: 49px; margin: 0 3px; }
.apps .alert { background: #7f454a; border-radius: 5px 5px 0 0; width: 49px; margin: 0 3px; }
.apps .badge { right: 4px; top: 6px; }
.green { background: #679f35; }
.coral { background: #f0504e; }
.apps .count-badge { background: #f8433d; right: 4px; top: 12px; height: 15px; line-height: 15px; border-radius: 5px; font-size: 11px; }
.m365 { align-self: end; justify-self: end; margin: 0 10px 2px 0; background: #111; border-radius: 2px; padding: 0 2px; font: bold 8px/10px var(--segoe); }
.teams-t, .excel-x { font: bold 13px/15px var(--segoe); padding-right: 15px; }
.tray { margin-left: auto; display: flex; align-items: center; gap: 20px; }
.tray svg:nth-of-type(5), .tray svg:nth-of-type(6) { margin-left: -10px; }
.tray time { text-align: right; font-size: 15px; line-height: 20px; }

.watermark { position: absolute; right: 58px; bottom: 96px; display: flex; flex-direction: column; color: rgba(165, 165, 165, .75); font-family: var(--segoe); font-size: 17px; line-height: 24px; pointer-events: none; }
.watermark strong { font-size: 24px; line-height: 34px; font-weight: 400; }
```
